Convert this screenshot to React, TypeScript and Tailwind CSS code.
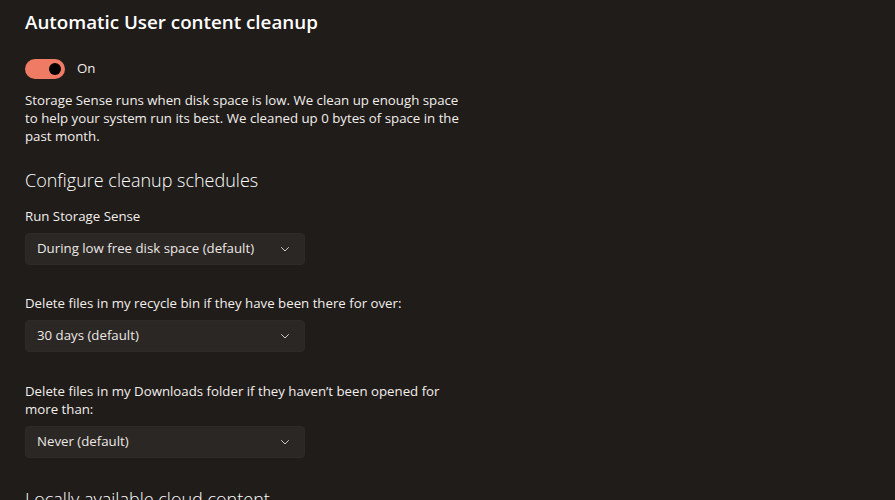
import React from "react";

function Chevron() {
  return (
    <svg width="10" height="10" viewBox="0 0 10 10" fill="none">
      <path d="M1.5 3.5 L5 7 L8.5 3.5" stroke="#cfcac6" strokeWidth="1" strokeLinecap="round" strokeLinejoin="round" />
    </svg>
  );
}

function Select({ value }: { value: string }) {
  return (
    <div className="flex h-[32px] w-[280px] items-center justify-between rounded-[4px] border border-[#2e2a28] bg-[#2b2725] pl-[11px] pr-[14px] text-[13.25px] text-[#ebe7e4]">
      <span>{value}</span>
      <Chevron />
    </div>
  );
}

export default function App() {
  return (
    <div
      className="h-[500px] w-[895px] overflow-hidden bg-[#201c1a] pl-[25px] text-[13.25px] text-[#f2eeeb]"
      style={{ fontFamily: '"Segoe UI", "Open Sans", "Noto Sans", sans-serif' }}
    >
      <h1 className="pt-[8px] text-[18.8px] font-semibold leading-[28px] text-white">Automatic User content cleanup</h1>
      <div className="mt-[23px] flex items-center gap-[12px]">
        <div className="flex h-[20px] w-[40px] items-center justify-end rounded-full bg-[#ef7b64] pr-[4px]">
          <div className="h-[12px] w-[12px] rounded-full bg-black" />
        </div>
        <span>On</span>
      </div>
      <p className="mt-[12px] w-[440px] leading-[18px] text-[#f2eeeb]">
        Storage Sense runs when disk space is low. We clean up enough space to help your system run its best. We cleaned up 0 bytes of space in the past month.
      </p>
      <h2 className="mt-[21px] text-[18px] font-light leading-[28px] text-white">Configure cleanup schedules</h2>
      <div className="mt-[13px] leading-[18px]">Run Storage Sense</div>
      <div className="mt-[8px]">
        <Select value="During low free disk space (default)" />
      </div>
      <div className="mt-[29px] leading-[18px]">Delete files in my recycle bin if they have been there for over:</div>
      <div className="mt-[8px]">
        <Select value="30 days (default)" />
      </div>
      <div className="mt-[30px] w-[440px] leading-[18px]">
        Delete files in my Downloads folder if they haven’t been opened for more than:
      </div>
      <div className="mt-[8px]">
        <Select value="Never (default)" />
      </div>
      <h2 className="mt-[27px] text-[18px] font-light leading-[28px] text-white">Locally available cloud content</h2>
    </div>
  );
}
